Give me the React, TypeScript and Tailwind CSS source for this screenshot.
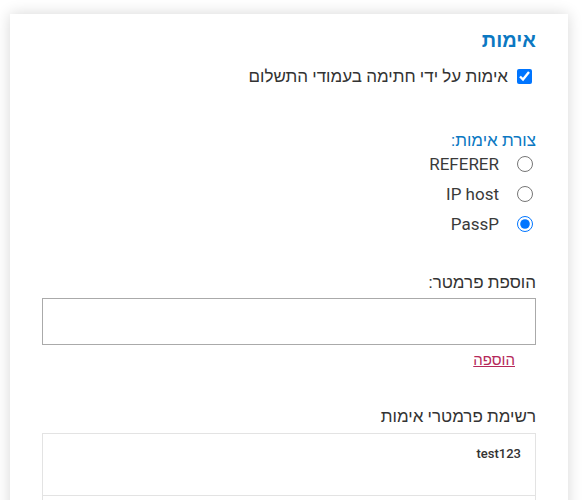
export default function App() {
  const methods = ["REFERER", "IP host", "PassP"];
  return (
    <div
      className="min-h-[500px] bg-white pt-[14px]"
      style={{ fontFamily: 'Roboto, "Liberation Sans", sans-serif' }}
    >
      <div
        dir="rtl"
        className="ml-[10px] w-[558px] bg-white px-[32px] pt-[12px] pb-8 shadow-[0_0_14px_rgba(0,0,0,0.16)] text-[#333]"
      >
        <h2 className="text-[20px] font-bold leading-7 text-[#0b78c2]">אימות</h2>

        <label className="mt-[10px] flex items-center gap-[9px] text-[17px] leading-6">
          <input type="checkbox" defaultChecked className="m-0 mr-[4px] h-[15px] w-[15px]" />
          <span>אימות על ידי חתימה בעמודי התשלום</span>
        </label>

        <div className="mt-[40px] text-[17px] leading-6 text-[#0b78c2]">צורת אימות:</div>
        <div className="mt-0 flex flex-col gap-[6px]">
          {methods.map((m) => (
            <label key={m} className="flex items-center gap-[18px] text-[17px] leading-6 text-[#3a3a3a]">
              <input
                type="radio"
                name="method"
                defaultChecked={m === "PassP"}
                className="m-0 mr-[3px] h-[16px] w-[16px]"
              />
              <span>{m}</span>
            </label>
          ))}
        </div>

        <div className="mt-[34px] text-[17px] leading-6">הוספת פרמטר:</div>
        <input
          type="text"
          className="mt-[4px] block h-[47px] w-full border border-[#aaa] bg-white px-2 outline-none"
        />
        <div className="mt-[3px] pr-[21px]">
          <a href="#" className="text-[15px] leading-6 text-[#b5285a] underline">
            הוספה
          </a>
        </div>

        <div className="mt-[32px] text-[17px] leading-6">רשימת פרמטרי אימות</div>
        <div className="mt-[5px] border border-[#e3e3e3]">
          <div className="h-[62px] border-b border-[#e3e3e3] px-[14px] pt-[10px] text-[13px] font-medium leading-5">
            test123
          </div>
          <div className="h-[40px]" />
        </div>
      </div>
    </div>
  );
}
